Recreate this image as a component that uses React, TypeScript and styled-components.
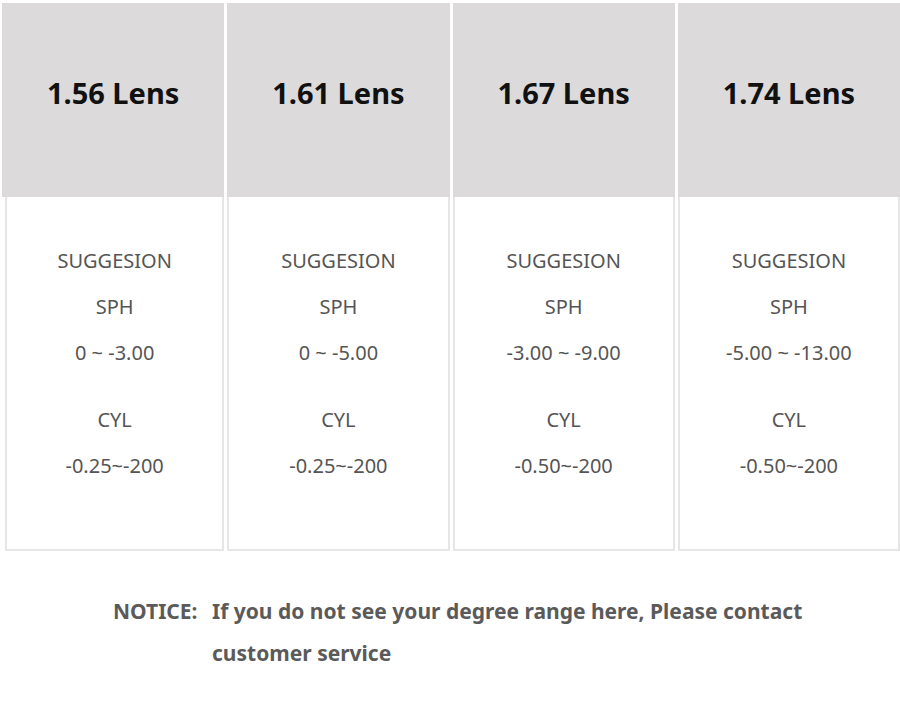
import styled, { createGlobalStyle } from "styled-components";

const lenses = [
  { name: "1.56 Lens", sph: "0 ~ -3.00", cyl: "-0.25~-200" },
  { name: "1.61 Lens", sph: "0 ~ -5.00", cyl: "-0.25~-200" },
  { name: "1.67 Lens", sph: "-3.00 ~ -9.00", cyl: "-0.50~-200" },
  { name: "1.74 Lens", sph: "-5.00 ~ -13.00", cyl: "-0.50~-200" },
];

const GlobalStyle = createGlobalStyle`
  body {
    margin: 0;
    background: #fff;
    font-family: "Noto Sans", "Open Sans", sans-serif;
  }
`;

export default function App() {
  return (
    <>
      <GlobalStyle />
      <Page>
        <Table>
          {lenses.map((l) => (
            <HeadCell key={l.name}>{l.name}</HeadCell>
          ))}
          {lenses.map((l, i) => (
            <BodyCell key={l.name} $first={i === 0}>
              <Line>SUGGESION</Line>
              <Line>SPH</Line>
              <Line>{l.sph}</Line>
              <Line $gap>CYL</Line>
              <Line>{l.cyl}</Line>
            </BodyCell>
          ))}
        </Table>
        <Notice>
          <NoticeLabel>NOTICE:</NoticeLabel>
          <NoticeText>
            If you do not see your degree range here, Please contact customer
            service
          </NoticeText>
        </Notice>
      </Page>
    </>
  );
}

const Page = styled.div`
  width: 900px;
  height: 704px;
  padding: 3px 0 0 2px;
  box-sizing: border-box;
  overflow: hidden;
`;

const Table = styled.div`
  display: grid;
  grid-template-columns: repeat(4, 1fr);
  column-gap: 3px;
`;

const HeadCell = styled.div`
  height: 194px;
  box-sizing: border-box;
  padding-bottom: 16px;
  background: #dcdadb;
  display: flex;
  align-items: center;
  justify-content: center;
  font-size: 29px;
  font-weight: 700;
  color: #111;
`;

const BodyCell = styled.div<{ $first?: boolean }>`
  height: 354px;
  box-sizing: border-box;
  border: 2px solid #e6e6e6;
  border-top: none;
  margin-left: ${(p) => (p.$first ? "3px" : "0")};
  padding-top: 41px;
  display: flex;
  flex-direction: column;
  align-items: center;
  color: #555;
  font-size: 20px;
`;

const Line = styled.div<{ $gap?: boolean }>`
  line-height: 46px;
  margin-top: ${(p) => (p.$gap ? "21px" : "0")};
`;

const Notice = styled.div`
  display: flex;
  padding: 39px 0 0 111px;
  color: #5a5a5a;
  font-size: 21px;
  font-weight: 700;
  line-height: 42px;
`;

const NoticeLabel = styled.div`
  width: 99px;
  flex: none;
`;

const NoticeText = styled.div`
  width: 600px;
`;
